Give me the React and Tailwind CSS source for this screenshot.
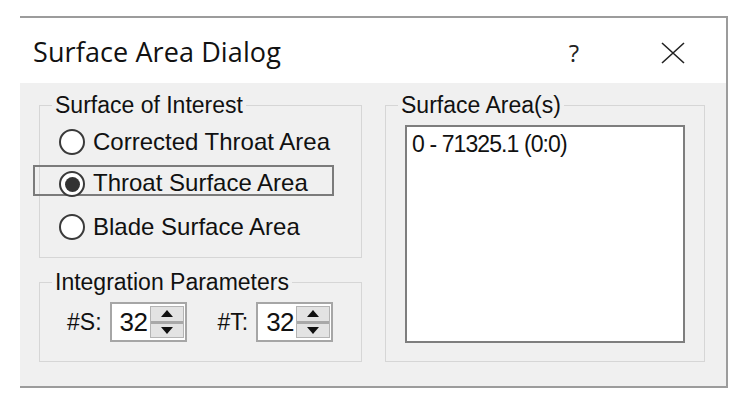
import React from 'react'

const label = "font-['Liberation_Sans',Arial,sans-serif] text-[23px] leading-[26px] text-[#111]"

function Radio({ checked }) {
    return (
        <span className="flex items-center justify-center w-[26px] h-[26px] rounded-full border-2 border-[#3a3a3a] bg-white shrink-0">
            {checked && <span className="w-[15px] h-[15px] rounded-full bg-[#333]" />}
        </span>
    )
}

function Spin({ value }) {
    return (
        <div className="flex items-stretch w-[77px] h-[40px] border-2 border-[#a6a6a6] bg-white">
            <div className={`${label} flex-1 flex items-center pl-[8px] text-[26px] tracking-[-0.6px]`}>{value}</div>
            <div className="flex flex-col w-[34px] my-[2px] mr-[1px] border border-[#b4b4b4] bg-[#e3e3e3]">
                <div className="flex-1 flex items-center justify-center">
                    <svg width="12" height="7" viewBox="0 0 12 7"><path d="M0 7 L6 0 L12 7 Z" fill="#111" /></svg>
                </div>
                <div className="h-[3px] bg-[#a8a8a8]" />
                <div className="flex-1 flex items-center justify-center">
                    <svg width="12" height="7" viewBox="0 0 12 7"><path d="M0 0 L6 7 L12 0 Z" fill="#111" /></svg>
                </div>
            </div>
        </div>
    )
}

export default function App() {
    return (
        <div className="w-[746px] h-[398px] bg-white pt-[16px] pl-[20px] overflow-hidden">
            <div className="w-[708px] border-t-2 border-r-2 border-b-2 border-[#9c9c9c]">
                {/* Title bar */}
                <div className="h-[65px] bg-white flex items-center pl-[13px] pt-[4px]">
                    <span className="font-['Open_Sans',sans-serif] text-[27px] text-[#111] tracking-[0.1px]">Surface Area Dialog</span>
                    <span className="ml-auto font-['Open_Sans',sans-serif] text-[24px] text-[#222] mr-[82px]">?</span>
                    <svg width="24" height="22" viewBox="0 0 24 22" className="mr-[41px]">
                        <path d="M1 1 L23 21 M23 1 L1 21" stroke="#222" strokeWidth="1.6" />
                    </svg>
                </div>

                {/* Body */}
                <div className="h-[303px] bg-[#f0f0f0] flex pt-[9px] pl-[19px] gap-[23px]">
                    <div className="w-[323px] flex flex-col gap-[11px]">
                        <fieldset className="h-[166px] border border-[#d6d6d6]">
                            <legend className={`${label} ml-[12px] px-[3px]`}>Surface of Interest</legend>
                            <div className="flex flex-col pt-[3px]">
                                <div className="h-[42px] flex items-center gap-[8px] pl-[19px]">
                                    <Radio />
                                    <span className={`${label} text-[24px]`}>Corrected Throat Area</span>
                                </div>
                                <div className="h-[43px] flex items-start">
                                    <div className="ml-[-7px] mt-[2px] w-[301px] h-[31px] border-2 border-[#7b7b7b] flex items-start gap-[8px] pl-[24px] pt-[4px]">
                                        <Radio checked />
                                        <span className={`${label} text-[24px] mt-[-1px]`}>Throat Surface Area</span>
                                    </div>
                                </div>
                                <div className="h-[42px] flex items-center gap-[8px] pl-[19px]">
                                    <Radio />
                                    <span className={`${label} text-[24px]`}>Blade Surface Area</span>
                                </div>
                            </div>
                        </fieldset>
                        <fieldset className="h-[93px] border border-[#d6d6d6]">
                            <legend className={`${label} ml-[12px] px-[3px]`}>Integration Parameters</legend>
                            <div className="flex items-center pl-[27px] pt-[7px]">
                                <span className={`${label} mr-[8px]`}>#S:</span>
                                <Spin value="32" />
                                <span className={`${label} ml-[31px] mr-[8px]`}>#T:</span>
                                <Spin value="32" />
                            </div>
                        </fieldset>
                    </div>

                    <fieldset className="w-[320px] h-[270px] border border-[#d6d6d6]">
                        <legend className={`${label} ml-[12px] px-[3px]`}>Surface Area(s)</legend>
                        <div className="ml-[19px] mt-[7px] w-[280px] h-[218px] bg-white border-2 border-[#7e7e7e] pl-[5px] pt-[4px]">
                            <div className={`${label} text-[22px] tracking-[-0.9px]`}>0 - 71325.1 (0:0)</div>
                        </div>
                    </fieldset>
                </div>
            </div>
        </div>
    )
}
